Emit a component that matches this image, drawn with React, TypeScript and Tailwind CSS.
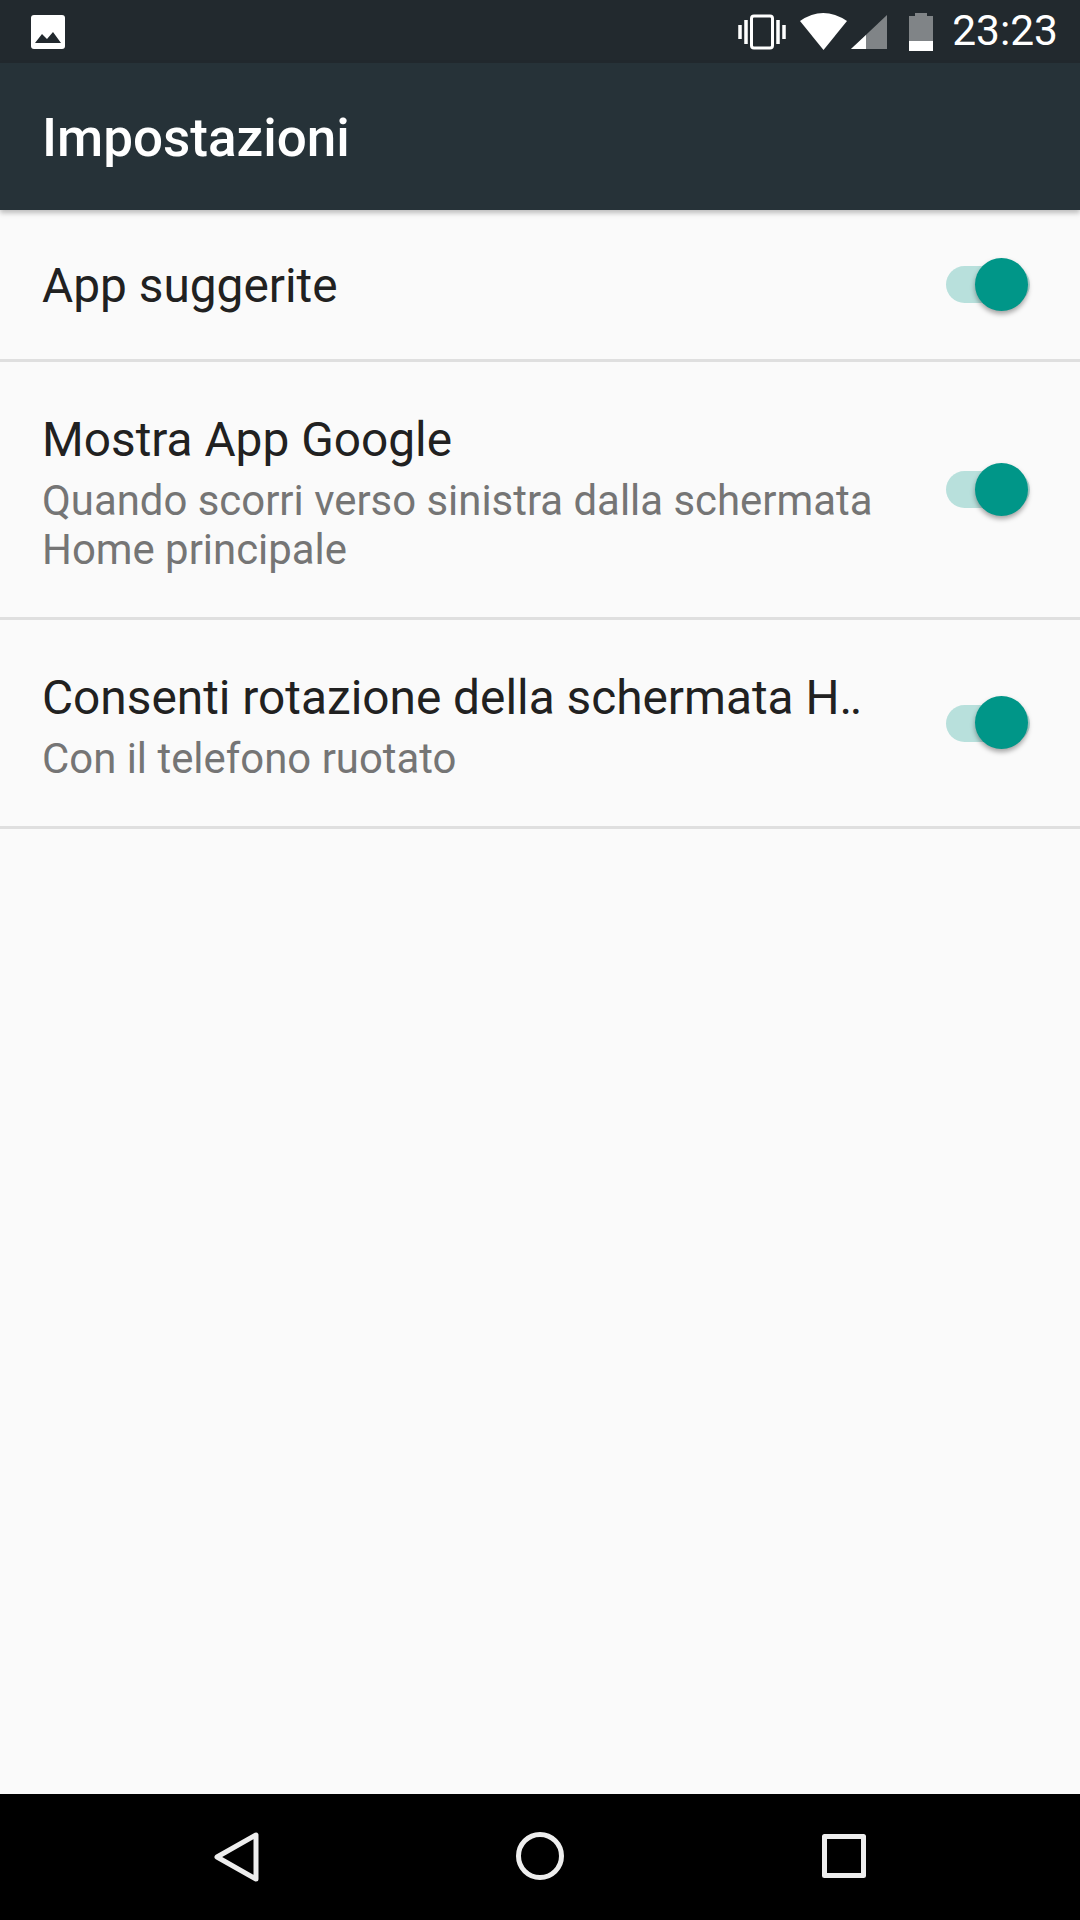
const font = { fontFamily: "Roboto, sans-serif" };

function Toggle() {
  return (
    <div className="relative w-[90px] h-[54px] shrink-0 flex items-center">
      <div className="w-[84px] h-[37px] rounded-full bg-[#b8e0dc]" />
      <div className="absolute left-[29px] top-0 w-[53px] h-[53px] rounded-full bg-[#009688] shadow-[0_3px_5px_rgba(0,0,0,0.35)]" />
    </div>
  );
}

function Row({ title, sub, h, single }: { title: string; sub?: string[]; h: string; single?: boolean }) {
  return (
    <div className={`flex items-center justify-between pl-[42px] pr-[44px] border-b-[3px] border-[#dfdfdf] ${h}`}>
      <div className={`min-w-0 ${single ? "pt-[2px]" : ""}`}>
        <div className="text-[47.8px] leading-[68px] text-[#212121] whitespace-nowrap">{title}</div>
        {sub && (
          <div className="mt-[2px]">
            {sub.map((s) => (
              <div key={s} className="text-[41.9px] leading-[49px] text-[#757575] whitespace-nowrap">{s}</div>
            ))}
          </div>
        )}
      </div>
      <Toggle />
    </div>
  );
}

export default function App() {
  return (
    <div style={font} className="w-[1080px] h-[1920px] flex flex-col bg-[#fafafa] overflow-hidden">
      <div className="h-[63px] shrink-0 bg-[#22292e] flex items-center text-white">
        <svg className="ml-[31px]" width="34" height="34" viewBox="0 0 34 34">
          <rect width="34" height="34" rx="3" fill="#fff" />
          <path d="M4 28 L11 19 L16 24 L22 17 L30 28 Z" fill="#22292e" />
        </svg>
        <div className="flex-1" />
        <svg width="48" height="36" viewBox="0 0 48 36" className="mr-[14px]" fill="none" stroke="#fff">
          <rect x="13.5" y="2" width="21" height="32" rx="2.5" strokeWidth="3" />
          <path d="M2 11 V25 M8 6 V30 M40 6 V30 M46 11 V25" strokeWidth="3.5" />
        </svg>
        <svg width="88" height="38" viewBox="0 0 88 38" className="mr-[21px]">
          <path d="M0 8 Q23 -8 47 8 L23.5 37 Z" fill="#fff" />
          <path d="M51 36 L87 2 V36 Z" fill="#808487" />
          <path d="M51 36 L66 22 V36 Z" fill="#fff" />
        </svg>
        <svg width="24" height="38" viewBox="0 0 24 38" className="mr-[19px]">
          <path d="M0 3 H6 V0 H18 V3 H24 V38 H0 Z" fill="#808487" />
          <rect y="28" width="24" height="10" fill="#fff" />
        </svg>
        <span className="text-[42.5px] mr-[22px] leading-none">23:23</span>
      </div>
      <div className="h-[147px] shrink-0 bg-[#263238] flex items-center pl-[42px] pt-[4px] relative shadow-[0_3px_5px_rgba(0,0,0,0.25)]">
        <span className="text-[53px] font-medium text-white">Impostazioni</span>
      </div>
      <Row title="App suggerite" h="h-[152px]" single />
      <Row title="Mostra App Google" sub={["Quando scorri verso sinistra dalla schermata", "Home principale"]} h="h-[258px]" />
      <Row title="Consenti rotazione della schermata H‥" sub={["Con il telefono ruotato"]} h="h-[209px]" />
      <div className="flex-1" />
      <div className="h-[126px] shrink-0 bg-black flex items-center relative">
        <svg className="absolute left-[214px] top-[38px]" width="46" height="50" viewBox="0 0 46 50" fill="none" stroke="#eee" strokeWidth="5" strokeLinejoin="round">
          <path d="M42 3 V47 L3 25 Z" />
        </svg>
        <svg className="absolute left-[516px] top-[38px]" width="48" height="48" viewBox="0 0 48 48" fill="none" stroke="#eee" strokeWidth="5">
          <circle cx="24" cy="24" r="21.5" />
        </svg>
        <svg className="absolute left-[822px] top-[40px]" width="44" height="44" viewBox="0 0 44 44" fill="none" stroke="#eee" strokeWidth="5" strokeLinejoin="round">
          <rect x="2.5" y="2.5" width="39" height="39" />
        </svg>
      </div>
    </div>
  );
}
